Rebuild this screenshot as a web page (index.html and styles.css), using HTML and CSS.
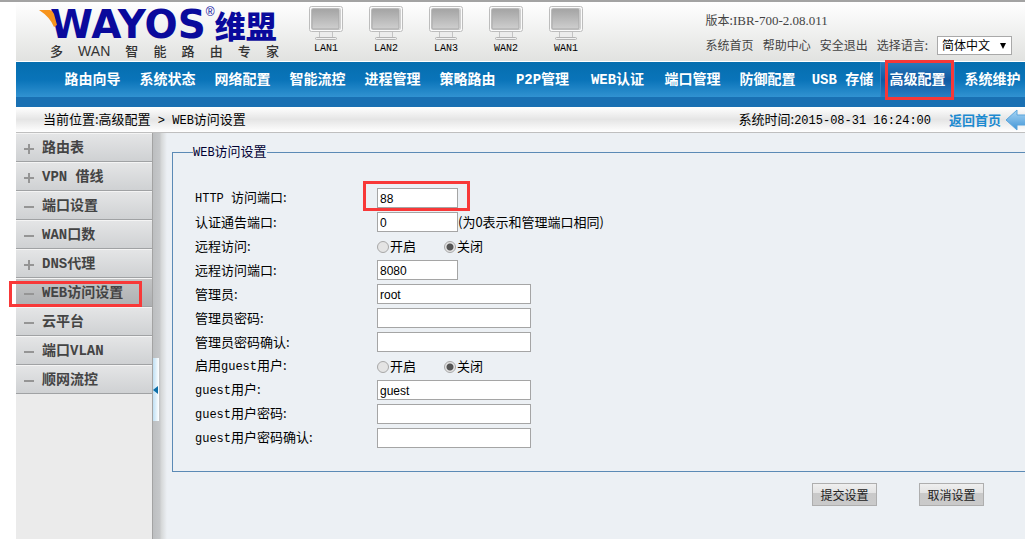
FILE: index.html
```html
<!DOCTYPE html>
<html lang="zh-CN">
<head>
    <meta charset="UTF-8">
    <meta name="viewport" content="width=device-width, initial-scale=1.0">
    <title>WEB访问设置</title>
    <link rel="stylesheet" href="styles.css">
</head>
<body>
    <header class="header">
        <div class="logo">
            <svg class="logo-wing" width="18" height="18" viewBox="0 0 18 18" aria-hidden="true">
                <path d="M0 0 H11 Q14 1 15 4 L18 15 L15 17 Q11 7 0 0 Z" fill="#f7941d"/>
            </svg>
            <div class="logo-name"><span class="logo-en">WAYOS</span><sup class="logo-reg">®</sup><span class="logo-cn">维盟</span></div>
            <div class="logo-sub"><span>多</span><span class="logo-wan">WAN</span><span>智</span><span>能</span><span>路</span><span>由</span><span>专</span><span>家</span></div>
        </div>

        <svg class="defs" width="0" height="0" aria-hidden="true">
            <defs>
                <linearGradient id="screen" x1="0" y1="0" x2="0" y2="1">
                    <stop offset="0" stop-color="#a4a4a4"/>
                    <stop offset="1" stop-color="#cfcfcf"/>
                </linearGradient>
                <linearGradient id="arrow" x1="0" y1="0" x2="0" y2="1">
                    <stop offset="0" stop-color="#a9d6f5"/>
                    <stop offset="1" stop-color="#3f94d6"/>
                </linearGradient>
                <symbol id="monitor" viewBox="0 0 34 35">
                    <rect x="0.5" y="0.5" width="33" height="25" rx="2" fill="#fafafa" stroke="#bdbdbd"/>
                    <rect x="2.5" y="2.5" width="29" height="21" rx="1" fill="#e6e6e6" stroke="#cfcfcf"/>
                    <rect x="3" y="3" width="27" height="20" rx="1" fill="url(#screen)" stroke="#a9a9a9"/>
                    <path d="M10.5 26 V32 H23.5 V26" fill="#ececec" stroke="#c4c4c4"/>
                    <rect x="6.5" y="31.5" width="21" height="2" rx="1" fill="#f2f2f2" stroke="#b4b4b4"/>
                </symbol>
            </defs>
        </svg>
        <ul class="ports">
            <li><svg width="34" height="35"><use href="#monitor"/></svg>LAN1</li>
            <li><svg width="34" height="35"><use href="#monitor"/></svg>LAN2</li>
            <li><svg width="34" height="35"><use href="#monitor"/></svg>LAN3</li>
            <li><svg width="34" height="35"><use href="#monitor"/></svg>WAN2</li>
            <li><svg width="34" height="35"><use href="#monitor"/></svg>WAN1</li>
        </ul>

        <div class="tools">
            <div class="version">版本:<span class="num">IBR-700-2.08.011</span></div>
            <div class="tool-links">
                <a href="#">系统首页</a>
                <a href="#">帮助中心</a>
                <a href="#">安全退出</a>
                <label for="lang">选择语言:</label>
                <span class="lang-box">
                    <select id="lang">
                        <option>简体中文</option>
                    </select>
                </span>
            </div>
        </div>
    </header>

    <nav class="nav">
        <a href="#">路由向导</a>
        <a href="#">系统状态</a>
        <a href="#">网络配置</a>
        <a href="#">智能流控</a>
        <a href="#">进程管理</a>
        <a href="#">策略路由</a>
        <a href="#">P2P管理</a>
        <a href="#">WEB认证</a>
        <a href="#">端口管理</a>
        <a href="#">防御配置</a>
        <a href="#">USB 存储</a>
        <a href="#" class="active">高级配置<span class="mark mark-nav"></span></a>
        <a href="#">系统维护</a>
    </nav>

    <div class="crumb">
        <div>当前位置:高级配置<span class="en"> &gt; WEB</span>访问设置</div>
        <div class="crumb-right">
            <span>系统时间:<span class="en">2015-08-31 16:24:00</span></span>
            <a href="#">返回首页
                <svg width="20" height="22" viewBox="0 0 20 22" aria-hidden="true">
                    <path d="M1 11 L12 1 V6 H22 V16 H12 V21 Z" fill="url(#arrow)" stroke="#5aa5dc"/>
                </svg>
            </a>
        </div>
    </div>

    <div class="main">
        <aside class="side">
            <a href="#" class="plus">路由表</a>
            <a href="#" class="plus">VPN 借线</a>
            <a href="#">端口设置</a>
            <a href="#">WAN口数</a>
            <a href="#" class="plus">DNS代理</a>
            <a href="#" class="active">WEB访问设置<span class="mark mark-side"></span></a>
            <a href="#">云平台</a>
            <a href="#">端口VLAN</a>
            <a href="#">顺网流控</a>
        </aside>
        <div class="splitter"><button type="button" class="handle" aria-label="收起菜单"></button></div>

        <form class="content">
            <fieldset>
                <legend><span class="en">WEB</span>访问设置</legend>
                <div class="row">
                    <label for="http-port"><span class="en">HTTP </span>访问端口:</label>
                    <span class="field"><input type="text" id="http-port" class="short" value="88"><span class="mark mark-field"></span></span>
                </div>
                <div class="row">
                    <label for="notice-port">认证通告端口:</label>
                    <input type="text" id="notice-port" class="short" value="0">
                    <span>(为0表示和管理端口相同)</span>
                </div>
                <div class="row">
                    <span class="caption">远程访问:</span>
                    <label class="radio"><input type="radio" name="remote">开启</label>
                    <label class="radio"><input type="radio" name="remote" checked>关闭</label>
                </div>
                <div class="row">
                    <label for="remote-port">远程访问端口:</label>
                    <input type="text" id="remote-port" class="short" value="8080">
                </div>
                <div class="row">
                    <label for="admin">管理员:</label>
                    <input type="text" id="admin" value="root">
                </div>
                <div class="row">
                    <label for="admin-pwd">管理员密码:</label>
                    <input type="password" id="admin-pwd">
                </div>
                <div class="row">
                    <label for="admin-pwd2">管理员密码确认:</label>
                    <input type="password" id="admin-pwd2">
                </div>
                <div class="row">
                    <span class="caption">启用<span class="en">guest</span>用户:</span>
                    <label class="radio"><input type="radio" name="guest-on">开启</label>
                    <label class="radio"><input type="radio" name="guest-on" checked>关闭</label>
                </div>
                <div class="row">
                    <label for="guest"><span class="en">guest</span>用户:</label>
                    <input type="text" id="guest" value="guest">
                </div>
                <div class="row">
                    <label for="guest-pwd"><span class="en">guest</span>用户密码:</label>
                    <input type="password" id="guest-pwd">
                </div>
                <div class="row">
                    <label for="guest-pwd2"><span class="en">guest</span>用户密码确认:</label>
                    <input type="password" id="guest-pwd2">
                </div>
            </fieldset>
            <div class="buttons">
                <button type="submit">提交设置</button>
                <button type="reset">取消设置</button>
            </div>
        </form>
    </div>
</body>
</html>
```
FILE: styles.css
```css
* {
    box-sizing: border-box;
}
body {
    margin: 0;
    padding-left: 16px;
    min-height: 100vh;
    display: flex;
    flex-direction: column;
    overflow: hidden;
    border-top: 2px solid #a3a3a3;
    background: #fff;
    color: #000;
    font: 13px/16px "Noto Sans CJK SC", sans-serif;
}
a {
    color: inherit;
    text-decoration: none;
}
.en {
    font-family: "Liberation Mono", monospace;
    font-size: 12px;
    white-space: pre;
}
.num {
    font-family: "Liberation Serif", serif;
    font-size: 13px;
}

/* header */
.header {
    display: flex;
    height: 60px;
    border-bottom: 1px solid #fff;
    background: linear-gradient(#fff, #e1e2e0);
}
.defs {
    position: absolute;
}
.logo {
    position: relative;
    width: 276px;
    flex: none;
    padding: 4px 0 0 34px;
    color: #0a0a9c;
}
.logo-wing {
    position: absolute;
    left: 23px;
    top: 8px;
}
.logo-name {
    display: flex;
    align-items: center;
    height: 37px;
    line-height: 36px;
    font-weight: 900;
}
.logo-en {
    font-family: "DejaVu Sans", sans-serif;
    font-weight: bold;
    font-size: 39px;
}
.logo-reg {
    align-self: flex-start;
    font: 12px/12px "Liberation Sans", sans-serif;
}
.logo-cn {
    font-size: 31px;
    line-height: 32px;
}
.logo-sub {
    display: flex;
    justify-content: space-between;
    width: 229px;
    color: #333;
    font-weight: 500;
    font-size: 13px;
    line-height: 16px;
}
.logo-wan {
    font-family: "Liberation Sans", sans-serif;
    font-size: 14px;
}
.ports {
    display: flex;
    gap: 26px;
    margin: 0;
    padding: 4px 0 0 17px;
    list-style: none;
    font: 10px/16px "Liberation Mono", monospace;
}
.ports li {
    display: flex;
    flex-direction: column;
    align-items: center;
    width: 34px;
}
.tools {
    margin-left: auto;
    padding: 10px 13px 0 0;
    color: #444;
    font-size: 12px;
    white-space: nowrap;
}
.tool-links {
    display: flex;
    align-items: center;
    gap: 9px;
    height: 32px;
}
.lang-box {
    position: relative;
}
.lang-box::after {
    content: "";
    position: absolute;
    right: 6px;
    top: 7px;
    border: 3px solid transparent;
    border-top: 6px solid #000;
    border-bottom: 0;
    pointer-events: none;
}
select {
    display: block;
    width: 75px;
    height: 19px;
    padding: 0 0 0 4px;
    border: 1px solid #a9a9a9;
    background: #fff;
    appearance: none;
    font: 12px/16px "Noto Sans CJK SC", sans-serif;
}

/* top menu */
.nav {
    display: flex;
    height: 45px;
    padding-left: 39px;
    background: linear-gradient(#056eaf, #0a74b9 18px, #3192d1 35px, #1970b3 35px);
    color: #fff;
    font: bold 14px/36px "Liberation Mono", "Noto Sans CJK SC", sans-serif;
}
.nav a {
    position: relative;
    flex: none;
    width: 75px;
    height: 35px;
    text-align: center;
    white-space: nowrap;
}
.nav .active {
    background: linear-gradient(#2a7dbd, #1159a2 50%, #2a7ec2);
    box-shadow: inset 0 1px #3187c5, inset 1px 0 #3187c5, inset -1px 0 #3187c5;
}
.mark {
    position: absolute;
    border: 3px solid #f83838;
    pointer-events: none;
}
.mark-nav {
    inset: -2px 1px -3px 5px;
}

.crumb {
    display: flex;
    justify-content: space-between;
    height: 26px;
    padding-left: 27px;
    border-bottom: 1px solid #bfbfbf;
    background: linear-gradient(#fff, #e5e5e5 50%, #fff);
    line-height: 24px;
    white-space: nowrap;
}
.crumb-right {
    display: flex;
    gap: 18px;
}
.crumb a {
    display: flex;
    align-items: center;
    gap: 4px;
    color: #1c8ad0;
    font-weight: bold;
}

/* left menu */
.main {
    display: flex;
    flex: 1;
}
.side {
    width: 137px;
    flex: none;
    border-right: 1px solid #a3a3a3;
    background: #ebebeb;
}
.side a {
    position: relative;
    display: flex;
    align-items: center;
    height: 29px;
    padding-left: 26px;
    border-top: 1px solid #f4f4f4;
    border-bottom: 1px solid #a0a2a4;
    background: linear-gradient(#e4e5e6, #cfd1d3);
    color: #444;
    font: bold 14px/28px "Liberation Mono", "Noto Sans CJK SC", sans-serif;
    white-space: nowrap;
}
.side a::before,
.side .plus::after {
    content: "";
    position: absolute;
    left: 8px;
    top: 14px;
    width: 10px;
    height: 2px;
    background: #959595;
}
.side .plus::after {
    left: 12px;
    top: 10px;
    width: 2px;
    height: 10px;
}
.side .active {
    background: linear-gradient(#c3c4c5, #aeb0b2);
}
.mark-side {
    inset: 2px 10px -1px -7px;
}
.splitter {
    width: 14px;
    flex: none;
    padding-top: 225px;
    background: linear-gradient(90deg, #bcbec0, #c6c8ca 7px, #d4d6d6 8px, #ecf0f4);
}
.handle {
    display: flex;
    align-items: center;
    width: 6px;
    height: 63px;
    padding: 0;
    border: 0;
    background: linear-gradient(90deg, #bfe0f4, #fff);
}
.handle::before {
    content: "";
    border: 4px solid transparent;
    border-right: 5px solid #0b6ea8;
    border-left: 0;
}

/* form */
.content {
    flex: 1;
    min-width: 0;
    padding: 10px 0 0 5px;
    background: #ecf0f4;
}
fieldset {
    margin: 0;
    min-width: 0;
    height: 329px;
    padding: 25px 0 0 22px;
    border: 1px solid #5b8ab5;
    border-right: 0;
}
legend {
    margin-left: -2px;
    padding: 0;
    color: #000033;
}
.row {
    display: flex;
    align-items: center;
    height: 24px;
}
.row > label:first-child,
.row > .caption {
    flex: none;
    width: 182px;
}
.field {
    position: relative;
}
.row input[type="text"],
.row input[type="password"] {
    display: block;
    width: 154px;
    height: 20px;
    padding: 1px 2px 0;
    border: 1px solid #a5a5a5;
    background: #fff;
    font: 12px/16px "Liberation Sans", sans-serif;
}
.row input.short {
    width: 81px;
}
.mark-field {
    inset: -7px -12px -3px -14px;
}
.radio {
    display: flex;
    align-items: center;
    gap: 1px;
    width: 67px;
}
.radio input {
    width: 12px;
    height: 12px;
    margin: 2px 0 0;
    border: 1px solid #a8a8a8;
    border-radius: 50%;
    appearance: none;
    background: #e4e4e4;
}
.radio input:checked {
    background: radial-gradient(circle, #555 3px, #e4e4e4 4px);
}
.buttons {
    display: flex;
    justify-content: flex-end;
    gap: 42px;
    padding: 11px 41px 0 0;
}
.buttons button {
    width: 65px;
    height: 23px;
    padding: 0;
    border: 1px solid #aeaeae;
    background: linear-gradient(#efefef, #e2e2e2 45%, #c9c9c9 45%, #cacaca);
    color: #222;
    font: 12px/20px "Noto Sans CJK SC", sans-serif;
}
```
